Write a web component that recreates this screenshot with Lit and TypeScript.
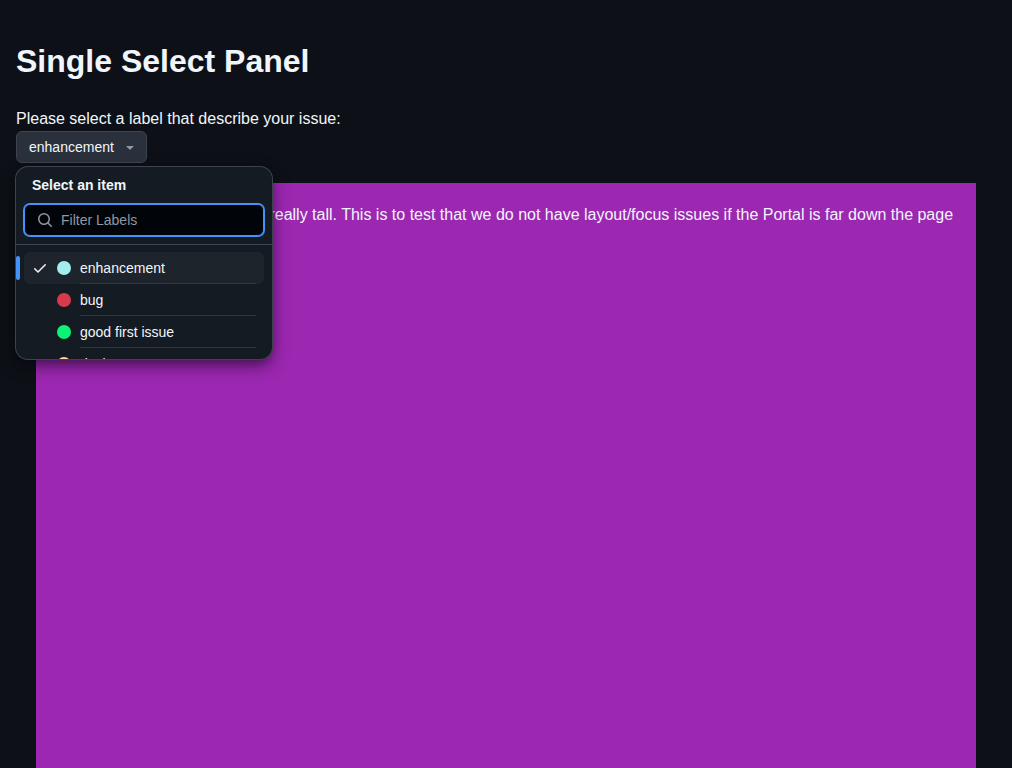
import { LitElement, html, css, nothing } from "lit";
import { customElement, property, state } from "lit/decorators.js";
import { styleMap } from "lit/directives/style-map.js";

interface LabelItem {
  text: string;
  color: string;
}

const LABELS: LabelItem[] = [
  { text: "enhancement", color: "#a2eeef" },
  { text: "bug", color: "#d73a4a" },
  { text: "good first issue", color: "#0cf478" },
  { text: "design", color: "#ffd78e" },
  { text: "blocker", color: "#ff0000" },
  { text: "backend", color: "#a4f287" },
  { text: "frontend", color: "#8dc6fc" },
];

@customElement("select-panel")
export class SelectPanel extends LitElement {
  static styles = css`
    :host {
      display: block;
      position: relative;
      font-size: 14px;
      line-height: 20px;
    }
    .anchor {
      display: flex;
      align-items: center;
      gap: 8px;
      height: 32px;
      padding: 0 8px 0 12px;
      border: 1px solid #3d444d;
      border-radius: 6px;
      background: #2a313c;
      color: #f0f6fc;
      font: inherit;
      cursor: pointer;
    }
    .caret {
      fill: #9198a1;
    }
    .overlay {
      position: absolute;
      top: 36px;
      left: 0;
      z-index: 1;
      display: flex;
      flex-direction: column;
      width: 256px;
      height: 192px;
      overflow: hidden;
      border-radius: 12px;
      background: #151b23;
      box-shadow:
        0 0 0 1px #3d444d,
        0 6px 12px -3px rgba(1, 4, 9, 0.4),
        0 6px 18px 0 rgba(1, 4, 9, 0.4);
    }
    .title {
      margin: 0;
      padding: 8px 16px;
      font-size: 14px;
      line-height: 20px;
      font-weight: 600;
    }
    .field {
      display: flex;
      align-items: center;
      gap: 8px;
      height: 32px;
      box-sizing: border-box;
      margin: 1px 8px 8px;
      padding: 0 12px;
      border: 1px solid #4493f8;
      border-radius: 6px;
      box-shadow: 0 0 0 1px #4493f8;
      background: #010409;
    }
    .search {
      flex: none;
      fill: #9198a1;
    }
    input {
      flex: 1;
      min-width: 0;
      padding: 0;
      border: 0;
      outline: 0;
      background: none;
      color: #f0f6fc;
      font: inherit;
    }
    input::placeholder {
      color: #9198a1;
      opacity: 1;
    }
    .list {
      flex: 1;
      min-height: 0;
      margin: 0;
      padding: 7px 8px 8px;
      overflow-y: auto;
      scrollbar-width: none;
      border-top: 1px solid #3d444d;
      list-style: none;
    }
    .item {
      position: relative;
      display: flex;
      align-items: center;
      gap: 8px;
      height: 32px;
      padding: 0 8px;
      border-radius: 6px;
      cursor: pointer;
    }
    .item.active {
      background: #1e242b;
    }
    .item.active::before {
      content: "";
      position: absolute;
      top: 4px;
      left: -8px;
      width: 4px;
      height: 24px;
      border-radius: 6px;
      background: #4493f8;
    }
    .mark {
      flex: none;
      width: 16px;
      height: 16px;
      fill: #f0f6fc;
    }
    .dot {
      flex: none;
      width: 14px;
      height: 14px;
      margin: 0 1px;
      border-radius: 50%;
    }
    .text {
      flex: 1;
      box-sizing: border-box;
      height: 32px;
      line-height: 32px;
      border-bottom: 1px solid #2f3742;
    }
  `;

  @property({ attribute: false }) items: LabelItem[] = [];
  @state() private selected = "enhancement";
  @state() private open = true;
  @state() private query = "";

  private onFilter(event: Event) {
    this.query = (event.target as HTMLInputElement).value;
  }

  private choose(text: string) {
    this.selected = text;
    this.open = false;
  }

  private renderItem(item: LabelItem) {
    const active = item.text === this.selected;
    return html`
      <li
        class="item ${active ? "active" : ""}"
        role="option"
        aria-selected=${active}
        @click=${() => this.choose(item.text)}
      >
        <span class="mark">
          ${active
            ? html`<svg class="mark" viewBox="0 0 16 16" aria-hidden="true" display="block">
                <path
                  d="M13.78 4.22a.75.75 0 0 1 0 1.06l-7.25 7.25a.75.75 0 0 1-1.06 0L2.22 9.28a.751.751 0 0 1 .018-1.042.751.751 0 0 1 1.042-.018L6 10.94l6.72-6.72a.75.75 0 0 1 1.06 0Z"
                ></path>
              </svg>`
            : nothing}
        </span>
        <span class="dot" style=${styleMap({ backgroundColor: item.color })}></span>
        <span class="text">${item.text}</span>
      </li>
    `;
  }

  render() {
    const shown = this.items.filter((item) => item.text.includes(this.query.toLowerCase()));
    return html`
      <button
        class="anchor"
        type="button"
        aria-haspopup="listbox"
        aria-expanded=${this.open}
        @click=${() => (this.open = !this.open)}
      >
        ${this.selected}
        <svg class="caret" width="16" height="16" viewBox="0 0 16 16" aria-hidden="true">
          <path
            d="m4.427 7.427 3.396 3.396a.25.25 0 0 0 .354 0l3.396-3.396A.25.25 0 0 0 11.396 7H4.604a.25.25 0 0 0-.177.427Z"
          ></path>
        </svg>
      </button>
      ${this.open
        ? html`<div class="overlay" role="dialog" aria-labelledby="title">
            <h2 class="title" id="title">Select an item</h2>
            <label class="field">
              <svg class="search" width="16" height="16" viewBox="0 0 16 16" aria-hidden="true">
                <path
                  d="M10.68 11.74a6 6 0 0 1-7.922-8.982 6 6 0 0 1 8.982 7.922l3.04 3.04a.749.749 0 0 1-.326 1.275.749.749 0 0 1-.734-.215ZM11.5 7a4.499 4.499 0 1 0-8.997 0A4.499 4.499 0 0 0 11.5 7Z"
                ></path>
              </svg>
              <input
                type="text"
                placeholder="Filter Labels"
                aria-label="Filter Labels"
                @input=${this.onFilter}
              />
            </label>
            <ul class="list" role="listbox" aria-labelledby="title">
              ${shown.map((item) => this.renderItem(item))}
            </ul>
          </div>`
        : nothing}
    `;
  }
}

@customElement("app-root")
export class AppRoot extends LitElement {
  static styles = css`
    :host {
      display: block;
      box-sizing: border-box;
      height: 100vh;
      overflow: hidden;
      padding: 16px;
      background: #0d1117;
      color: #f0f6fc;
      font-family: "Liberation Sans", Arial, sans-serif;
      font-size: 16px;
      line-height: 24px;
    }
    h1 {
      margin: 21px 0 22px;
      font-size: 32px;
      line-height: 48px;
      font-weight: 700;
    }
    .tall {
      height: 200vh;
      margin: 20px;
      padding: 20px;
      background: #9c27b0;
    }
  `;

  render() {
    return html`
      <h1>Single Select Panel</h1>
      <div>Please select a label that describe your issue:</div>
      <select-panel .items=${LABELS}></select-panel>
      <div class="tall">
        This element makes the body really tall. This is to test that we do not have layout/focus
        issues if the Portal is far down the page
      </div>
    `;
  }
}
